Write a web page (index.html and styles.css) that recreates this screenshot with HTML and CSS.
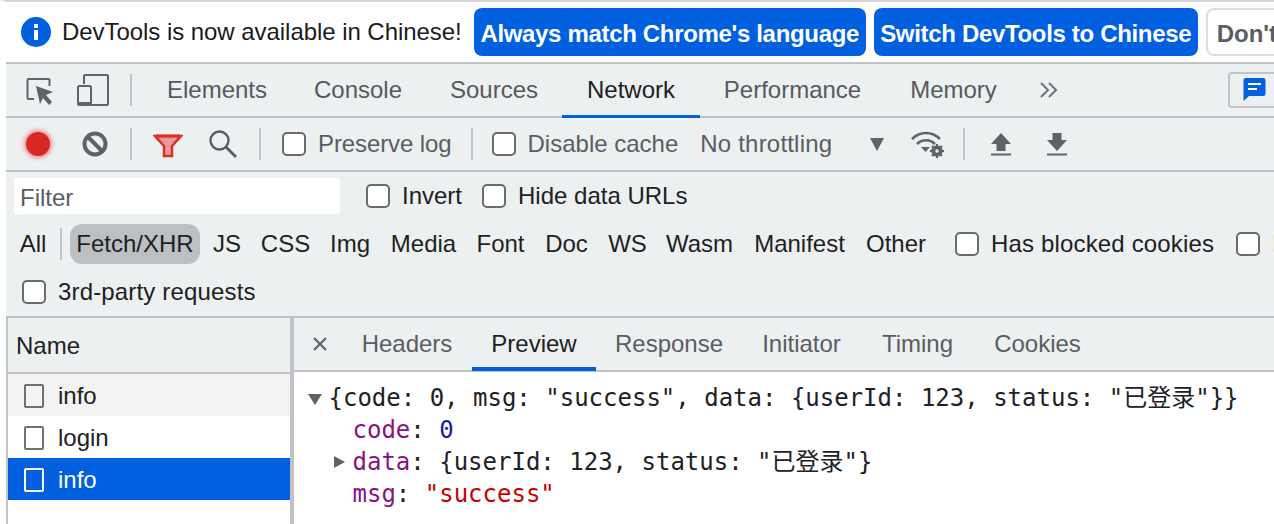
FILE: index.html
```html
<!DOCTYPE html>
<html lang="en">
<head>
<meta charset="utf-8">
<title>DevTools Network</title>
<link rel="stylesheet" href="styles.css">
</head>
<body>
<div class="app">
  <div class="infobar">
    <svg class="info-icon" width="30" height="30" viewBox="0 0 30 30"><circle cx="15" cy="15" r="15" fill="#0060df"/><rect x="13" y="7" width="4" height="4" fill="#fff"/><rect x="13" y="13" width="4" height="10" fill="#fff"/></svg>
    <span class="info-text">DevTools is now available in Chinese!</span>
    <button class="btn btn-primary btn-always">Always match Chrome's language</button>
    <button class="btn btn-primary btn-switch">Switch DevTools to Chinese</button>
    <button class="btn btn-plain">Don't show again</button>
  </div>

  <div class="tabbar">
    <svg class="ic-inspect" width="30" height="30" viewBox="0 0 30 30"><path d="M9 24H3.500a1 1 0 0 1-1-1V5a1 1 0 0 1 1-1h20a1 1 0 0 1 1 1v6" fill="none" stroke="#5f6368" stroke-width="2"/><path d="M11 11l17 6-7 3 6 7-3 3-6-7-3 6z" fill="#5f6368"/></svg>
    <svg class="ic-device" width="32" height="32" viewBox="0 0 32 32"><path d="M7 10V2a1 1 0 0 1 1-1h22a1 1 0 0 1 1 1v28a1 1 0 0 1-1 1H14" fill="none" stroke="#5f6368" stroke-width="2"/><rect x="1" y="12" width="13" height="19" rx="1.500" fill="none" stroke="#5f6368" stroke-width="2"/><rect x="1" y="28" width="13" height="3" fill="#5f6368"/></svg>
    <span class="sep sep-tabs"></span>
    <nav class="tabs">
      <span class="tab">Elements</span>
      <span class="tab">Console</span>
      <span class="tab">Sources</span>
      <span class="tab tab-active">Network</span>
      <span class="tab">Performance</span>
      <span class="tab">Memory</span>
    </nav>
    <svg class="ic-more" width="18" height="16" viewBox="0 0 18 16"><path d="M1 1l7 7-7 7M9 1l7 7-7 7" fill="none" stroke="#6e7175" stroke-width="2"/></svg>
    <div class="feedback">
      <svg width="24" height="24" viewBox="0 0 24 24"><path d="M3 1h18a2.500 2.500 0 0 1 2.500 2.500v13A2.500 2.500 0 0 1 21 19H7l-5.500 5V3.500A2.500 2.500 0 0 1 3 1z" fill="#0060df"/><rect x="6" y="6" width="13" height="2" fill="#fff"/><rect x="6" y="11" width="9" height="2" fill="#fff"/></svg>
    </div>
  </div>

  <div class="toolbar">
    <span class="record"></span>
    <svg class="ic-clear" width="26" height="26" viewBox="0 0 26 26"><circle cx="13" cy="13" r="10.500" fill="none" stroke="#5f6368" stroke-width="4"/><path d="M6 6l14 14" stroke="#5f6368" stroke-width="4"/></svg>
    <span class="sep sep-a"></span>
    <svg class="ic-filter" width="30" height="24" viewBox="0 0 30 24"><path d="M2 2h26L19 12v10h-8V12z" fill="#e79a9a" stroke="#d93025" stroke-width="2.500"/><path d="M3 2h24" stroke="#d93025" stroke-width="3"/></svg>
    <svg class="ic-search" width="28" height="28" viewBox="0 0 28 28"><circle cx="10.500" cy="10.500" r="9" fill="none" stroke="#5a5d60" stroke-width="2.400"/><path d="M17 17l10 10" stroke="#5a5d60" stroke-width="2.800"/></svg>
    <span class="sep sep-b"></span>
    <label class="check check-preserve"><span class="box"></span><span class="check-label label-tight">Preserve log</span></label>
    <span class="sep sep-c"></span>
    <label class="check check-cache"><span class="box"></span><span class="check-label">Disable cache</span></label>
    <span class="throttle">No throttling</span>
    <span class="arrow-down"></span>
    <svg class="ic-wifi" width="34" height="28" viewBox="0 0 34 28"><path d="M2 9c8-8 20-8 28 0M7 14c5-5 13-5 18 0" fill="none" stroke="#5f6368" stroke-width="2.500"/><path d="M11 17h9l-4.500 5z" fill="#5f6368"/><circle cx="27" cy="21" r="4" fill="none" stroke="#5f6368" stroke-width="3.500"/><path d="M27 14v14M20 21h14M22 16l10 10M32 16L22 26" stroke="#5f6368" stroke-width="2"/><circle cx="27" cy="21" r="1.700" fill="#ecf0f1"/></svg>
    <span class="sep sep-d"></span>
    <svg class="ic-up" width="20" height="24" viewBox="0 0 20 24"><path d="M10 1l10 11h-5.500v7h-9v-7H0z" fill="#5f6368"/><rect y="21.500" width="20" height="2" fill="#5f6368"/></svg>
    <svg class="ic-down" width="20" height="24" viewBox="0 0 20 24"><path d="M10 19L0 8h5.500V1h9v7H20z" fill="#5f6368"/><rect y="21.500" width="20" height="2" fill="#5f6368"/></svg>
  </div>

  <div class="filters">
    <div class="filter-row filter-row-top">
      <div class="filter-input">Filter</div>
      <label class="check check-invert"><span class="box"></span><span class="filter-label">Invert</span></label>
      <label class="check check-hide"><span class="box"></span><span class="filter-label">Hide data URLs</span></label>
    </div>
    <div class="filter-row filter-row-types">
      <span class="type type-all">All</span>
      <span class="sep sep-type"></span>
      <span class="type type-on">Fetch/XHR</span>
      <span class="type type-js">JS</span>
      <span class="type type-css">CSS</span>
      <span class="type type-img">Img</span>
      <span class="type type-media">Media</span>
      <span class="type type-font">Font</span>
      <span class="type type-doc">Doc</span>
      <span class="type type-ws">WS</span>
      <span class="type type-wasm">Wasm</span>
      <span class="type type-manifest">Manifest</span>
      <span class="type type-other">Other</span>
      <label class="check check-blocked"><span class="box"></span><span class="filter-label label-wide">Has blocked cookies</span></label>
      <label class="check check-blocked-next"><span class="box"></span><span class="filter-label">Blocked Requests</span></label>
    </div>
    <div class="filter-row filter-row-third">
      <label class="check"><span class="box"></span><span class="filter-label label-wide">3rd-party requests</span></label>
    </div>
  </div>

  <div class="panels">
    <aside class="list">
      <div class="list-head">Name</div>
      <div class="req req-hover"><span class="doc"></span>info</div>
      <div class="req"><span class="doc"></span>login</div>
      <div class="req req-selected"><span class="doc"></span>info</div>
    </aside>
    <section class="detail">
      <div class="detail-tabs">
        <svg class="ic-close" width="14" height="14" viewBox="0 0 14 14"><path d="M1 1l12 12M13 1L1 13" stroke="#5f6368" stroke-width="2.200"/></svg>
        <span class="dtab dtab-headers">Headers</span>
        <span class="dtab dtab-preview dtab-active">Preview</span>
        <span class="dtab dtab-response">Response</span>
        <span class="dtab dtab-initiator">Initiator</span>
        <span class="dtab dtab-timing">Timing</span>
        <span class="dtab dtab-cookies">Cookies</span>
      </div>
      <div class="json">
        <div class="json-line"><span class="tri tri-open"></span>{code: 0, msg: "success", data: {userId: 123, status: "已登录"}}</div>
        <div class="json-line json-child"><span class="key">code</span>: <span class="num">0</span></div>
        <div class="json-line json-child"><span class="tri tri-closed"></span><span class="key">data</span>: {userId: 123, status: "已登录"}</div>
        <div class="json-line json-child"><span class="key">msg</span>: <span class="str">"success"</span></div>
      </div>
    </section>
  </div>
</div>
</body>
</html>
```
FILE: styles.css
```css
* { box-sizing: border-box; }
html, body { margin: 0; height: 100%; overflow: hidden; background: #fff; }
body { font-family: "Liberation Sans", Arial, sans-serif; font-size: 24px; color: #202124; }
.app { height: 524px; width: 1274px; display: flex; flex-direction: column; border-top: 2px solid #d4d4d4; border-left: 6px solid #fff; position: relative; overflow: hidden; }
.app::before { content: ""; position: absolute; left: -2px; top: 0; bottom: 0; width: 2px; background: #c4c7cb; }

.infobar { height: 60px; flex: none; display: flex; align-items: center; white-space: nowrap; background: #fff; padding-left: 15px; }
.info-icon { flex: none; }
.info-text { margin-left: 11px; letter-spacing: -.05px; color: #1b1b1b; }
.btn { height: 48px; flex: none; border-radius: 8px; font: bold 24px "Liberation Sans", Arial, sans-serif; padding: 3px 0 0; white-space: nowrap; border: 0; letter-spacing: -.33px; }
.btn-primary { background: #0060df; color: #fff; }
.btn-always { margin-left: 12px; width: 392px; }
.btn-switch { margin-left: 8px; width: 324px; }
.btn-plain { margin-left: 8px; width: 250px; background: #fff; color: #5a5d61; border: 2px solid #dadce0; text-align: left; padding-left: 9px; letter-spacing: 0; }

.tabbar { height: 54px; flex: none; display: flex; align-items: center; background: #ecf0f1; border-top: 2px solid #bfc3c8; white-space: nowrap; }
.ic-inspect { margin-left: 19px; flex: none; }
.ic-device { margin-left: 22px; flex: none; }
.sep { width: 2px; flex: none; background: #c0c4c9; }
.sep-tabs { height: 32px; margin-left: 21px; }
.tabs { display: flex; margin-left: 12px; height: 54px; flex: none; align-self: flex-start; position: relative; z-index: 1; }
.tab { line-height: 52px; height: 54px; text-align: center; color: #555a5f; border-bottom: 3px solid transparent; flex: none; }
.tab:nth-child(1) { width: 146px; }
.tab:nth-child(2) { width: 136px; }
.tab:nth-child(3) { width: 136px; }
.tab:nth-child(4) { width: 138px; }
.tab:nth-child(5) { width: 185px; }
.tab:nth-child(6) { width: 137px; }
.tab-active { color: #202124; border-bottom-color: #0060df; }
.ic-more { margin-left: 18px; flex: none; }
.feedback { margin-left: 170px; width: 60px; height: 36px; flex: none; border: 2px solid #c0c4c9; border-radius: 4px; padding: 3px 0 0 12px; }
.feedback svg { display: block; }

.toolbar { height: 54px; flex: none; display: flex; align-items: center; background: #ecf0f1; border-top: 2px solid #bfc3c8; white-space: nowrap; }
.record { width: 24px; height: 24px; flex: none; margin-left: 20px; border-radius: 50%; background: #d92725; box-shadow: 0 0 4px 2px #e88f8d; }
.ic-clear { margin-left: 32px; flex: none; }
.sep-a { height: 32px; margin-left: 22px; }
.ic-filter { margin-left: 21px; flex: none; margin-top: 4px; }
.ic-search { margin-left: 26px; flex: none; }
.sep-b { height: 32px; margin-left: 22px; }
.check { display: inline-flex; align-items: center; flex: none; }
.box { width: 24px; height: 24px; flex: none; background: #fff; border: 2px solid #6a6d70; border-radius: 5px; }
.check-label { margin-left: 12px; color: #5a5d61; }
.label-tight { letter-spacing: -.1px; }
.check-preserve { margin-left: 21px; }
.sep-c { height: 32px; margin-left: 19px; }
.check-cache { margin-left: 19px; }
.throttle { margin-left: 22px; color: #5a5d61; flex: none; letter-spacing: .2px; }
.arrow-down { flex: none; width: 0; height: 0; margin-left: 38px; border-left: 7px solid transparent; border-right: 7px solid transparent; border-top: 13px solid #5f6368; }
.ic-wifi { margin-left: 26px; flex: none; }
.sep-d { height: 32px; margin-left: 19px; }
.ic-up { margin-left: 26px; flex: none; }
.ic-down { margin-left: 36px; flex: none; }

.filters { height: 148px; flex: none; background: #ecf0f1; border-top: 2px solid #bfc3c8; border-bottom: 2px solid #bfc3c8; white-space: nowrap; }
.filter-row { display: flex; align-items: center; }
.filter-row-top { height: 48px; padding-left: 8px; }
.filter-input { width: 326px; height: 36px; background: #fff; color: #5a5d61; line-height: 40px; padding-left: 6px; flex: none; }
.filter-label { margin-left: 12px; color: #202124; }
.label-wide { letter-spacing: .16px; }
.check-invert { margin-left: 26px; }
.check-hide { margin-left: 20px; }
.filter-row-types { height: 48px; padding-left: 7px; gap: 7px; }
.type { height: 40px; line-height: 40px; border-radius: 12px; color: #1f1f1f; flex: none; text-align: center; }
.type-all { width: 40px; }
.type-on { width: 130px; background: #bcbfc3; }
.sep-type { height: 32px; margin-right: 1px; }
.type-js { width: 42px; margin-left: -1px; }
.type-css { width: 61px; }
.type-img { width: 54px; }
.type-media { width: 79px; }
.type-font { width: 61px; }
.type-doc { width: 57px; }
.type-ws { width: 51px; }
.type-wasm { width: 79px; }
.type-manifest { width: 107px; }
.type-other { width: 72px; }
.check-blocked { margin-left: 16px; }
.check-blocked-next { margin-left: 15px; }
.filter-row-third { height: 48px; padding-left: 16px; }

.panels { flex: 1; display: flex; min-height: 0; }
.list { width: 288px; flex: none; border-left: 2px solid #bfc3c8; border-right: 4px solid #bfc3c8; background: #fff; }
.list-head { height: 56px; background: #ecf0f1; border-bottom: 2px solid #bfc3c8; line-height: 56px; padding-left: 8px; }
.req { height: 42px; display: flex; align-items: center; padding: 2px 0 0 16px; color: #202124; }
.req-hover { background: #f3f3f3; }
.req-selected { background: #0060df; color: #fff; }
.doc { width: 20px; height: 24px; margin-right: 14px; flex: none; border: 2px solid #6e7175; border-radius: 2px; }
.req-selected .doc { border-color: #fff; }

.detail { flex: 1; min-width: 0; background: #fff; }
.detail-tabs { height: 54px; display: flex; align-items: center; background: #ecf0f1; border-bottom: 2px solid #bfc3c8; white-space: nowrap; }
.ic-close { margin-left: 19px; margin-right: 15px; flex: none; }
.dtab { height: 54px; line-height: 54px; text-align: center; color: #5a5d61; flex: none; border-bottom: 4px solid transparent; }
.dtab-headers { width: 130px; }
.dtab-preview { width: 124px; }
.dtab-response { width: 146px; }
.dtab-initiator { width: 119px; }
.dtab-timing { width: 113px; }
.dtab-cookies { width: 127px; }
.dtab-active { color: #202124; border-bottom-color: #0060df; }

.json { padding: 10px 0 0 14px; font: 24px/32px "DejaVu Sans Mono", "Noto Sans CJK SC", monospace; color: #202124; }
.json-line { position: relative; padding-left: 20.500px; white-space: pre; }
.json-child { padding-left: 44.500px; }
.key { color: #881280; }
.num { color: #1a1aa6; }
.str { color: #c80000; }
.tri { position: absolute; width: 0; height: 0; }
.tri-open { left: 0; top: 12px; border-left: 7px solid transparent; border-right: 7px solid transparent; border-top: 11px solid #5f6368; }
.tri-closed { left: 26px; top: 10px; border-top: 6.500px solid transparent; border-bottom: 6.500px solid transparent; border-left: 11px solid #5f6368; }
```
